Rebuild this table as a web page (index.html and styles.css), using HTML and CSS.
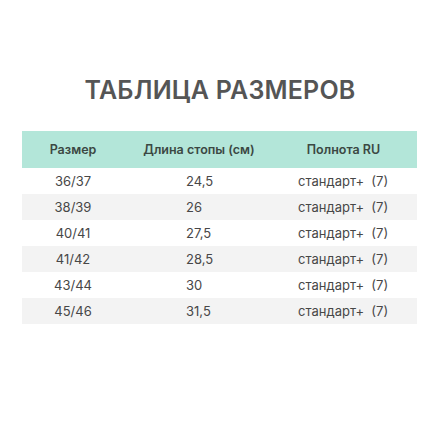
FILE: index.html
```html
<!DOCTYPE html>
<html lang="ru">
<head>
<meta charset="utf-8">
<link rel="stylesheet" href="styles.css">
</head>
<body>
<div class="page">
  <h1 class="title">ТАБЛИЦА РАЗМЕРОВ</h1>
  <div class="table">
    <div class="row head">
      <div class="c1">Размер</div>
      <div class="c2">Длина стопы (см)</div>
      <div class="c3">Полнота RU</div>
    </div>
    <div class="row">
      <div class="c1">36/37</div><div class="c2">24,5</div><div class="c3">стандарт+&nbsp; (7)</div>
    </div>
    <div class="row alt">
      <div class="c1">38/39</div><div class="c2">26</div><div class="c3">стандарт+&nbsp; (7)</div>
    </div>
    <div class="row">
      <div class="c1">40/41</div><div class="c2">27,5</div><div class="c3">стандарт+&nbsp; (7)</div>
    </div>
    <div class="row alt">
      <div class="c1">41/42</div><div class="c2">28,5</div><div class="c3">стандарт+&nbsp; (7)</div>
    </div>
    <div class="row">
      <div class="c1">43/44</div><div class="c2">30</div><div class="c3">стандарт+&nbsp; (7)</div>
    </div>
    <div class="row alt">
      <div class="c1">45/46</div><div class="c2">31,5</div><div class="c3">стандарт+&nbsp; (7)</div>
    </div>
  </div>
</div>
</body>
</html>
```
FILE: styles.css
```css
html, body {
  margin: 0;
  padding: 0;
  background: #ffffff;
}
.page {
  width: 440px;
  height: 440px;
  font-family: Inter, "Noto Sans", sans-serif;
  color: #474747;
  padding-top: 74px;
  box-sizing: border-box;
}
.title {
  margin: 0;
  text-align: center;
  font-size: 25px;
  font-weight: 600;
  line-height: 32px;
  color: #555555;
  letter-spacing: 0.2px;
}
.table {
  margin: 25px 0 0 22px;
  width: 395px;
}
.row {
  display: grid;
  grid-template-columns: 102px 150px 143px;
  height: 26px;
  align-items: center;
  font-size: 13px;
}
.row.alt {
  background: #f3f3f3;
}
.row.head {
  height: 37px;
  background: #b3e6d9;
  color: #3b4843;
  font-weight: 600;
  font-size: 12.5px;
}
.c1 {
  text-align: center;
}
.row .c2 {
  padding-left: 62px;
}
.row .c3 {
  padding-left: 24px;
}
.row.head .c2,
.row.head .c3 {
  padding-left: 0;
  text-align: center;
}
.row.head .c3 {
  padding-right: 4px;
}
```
